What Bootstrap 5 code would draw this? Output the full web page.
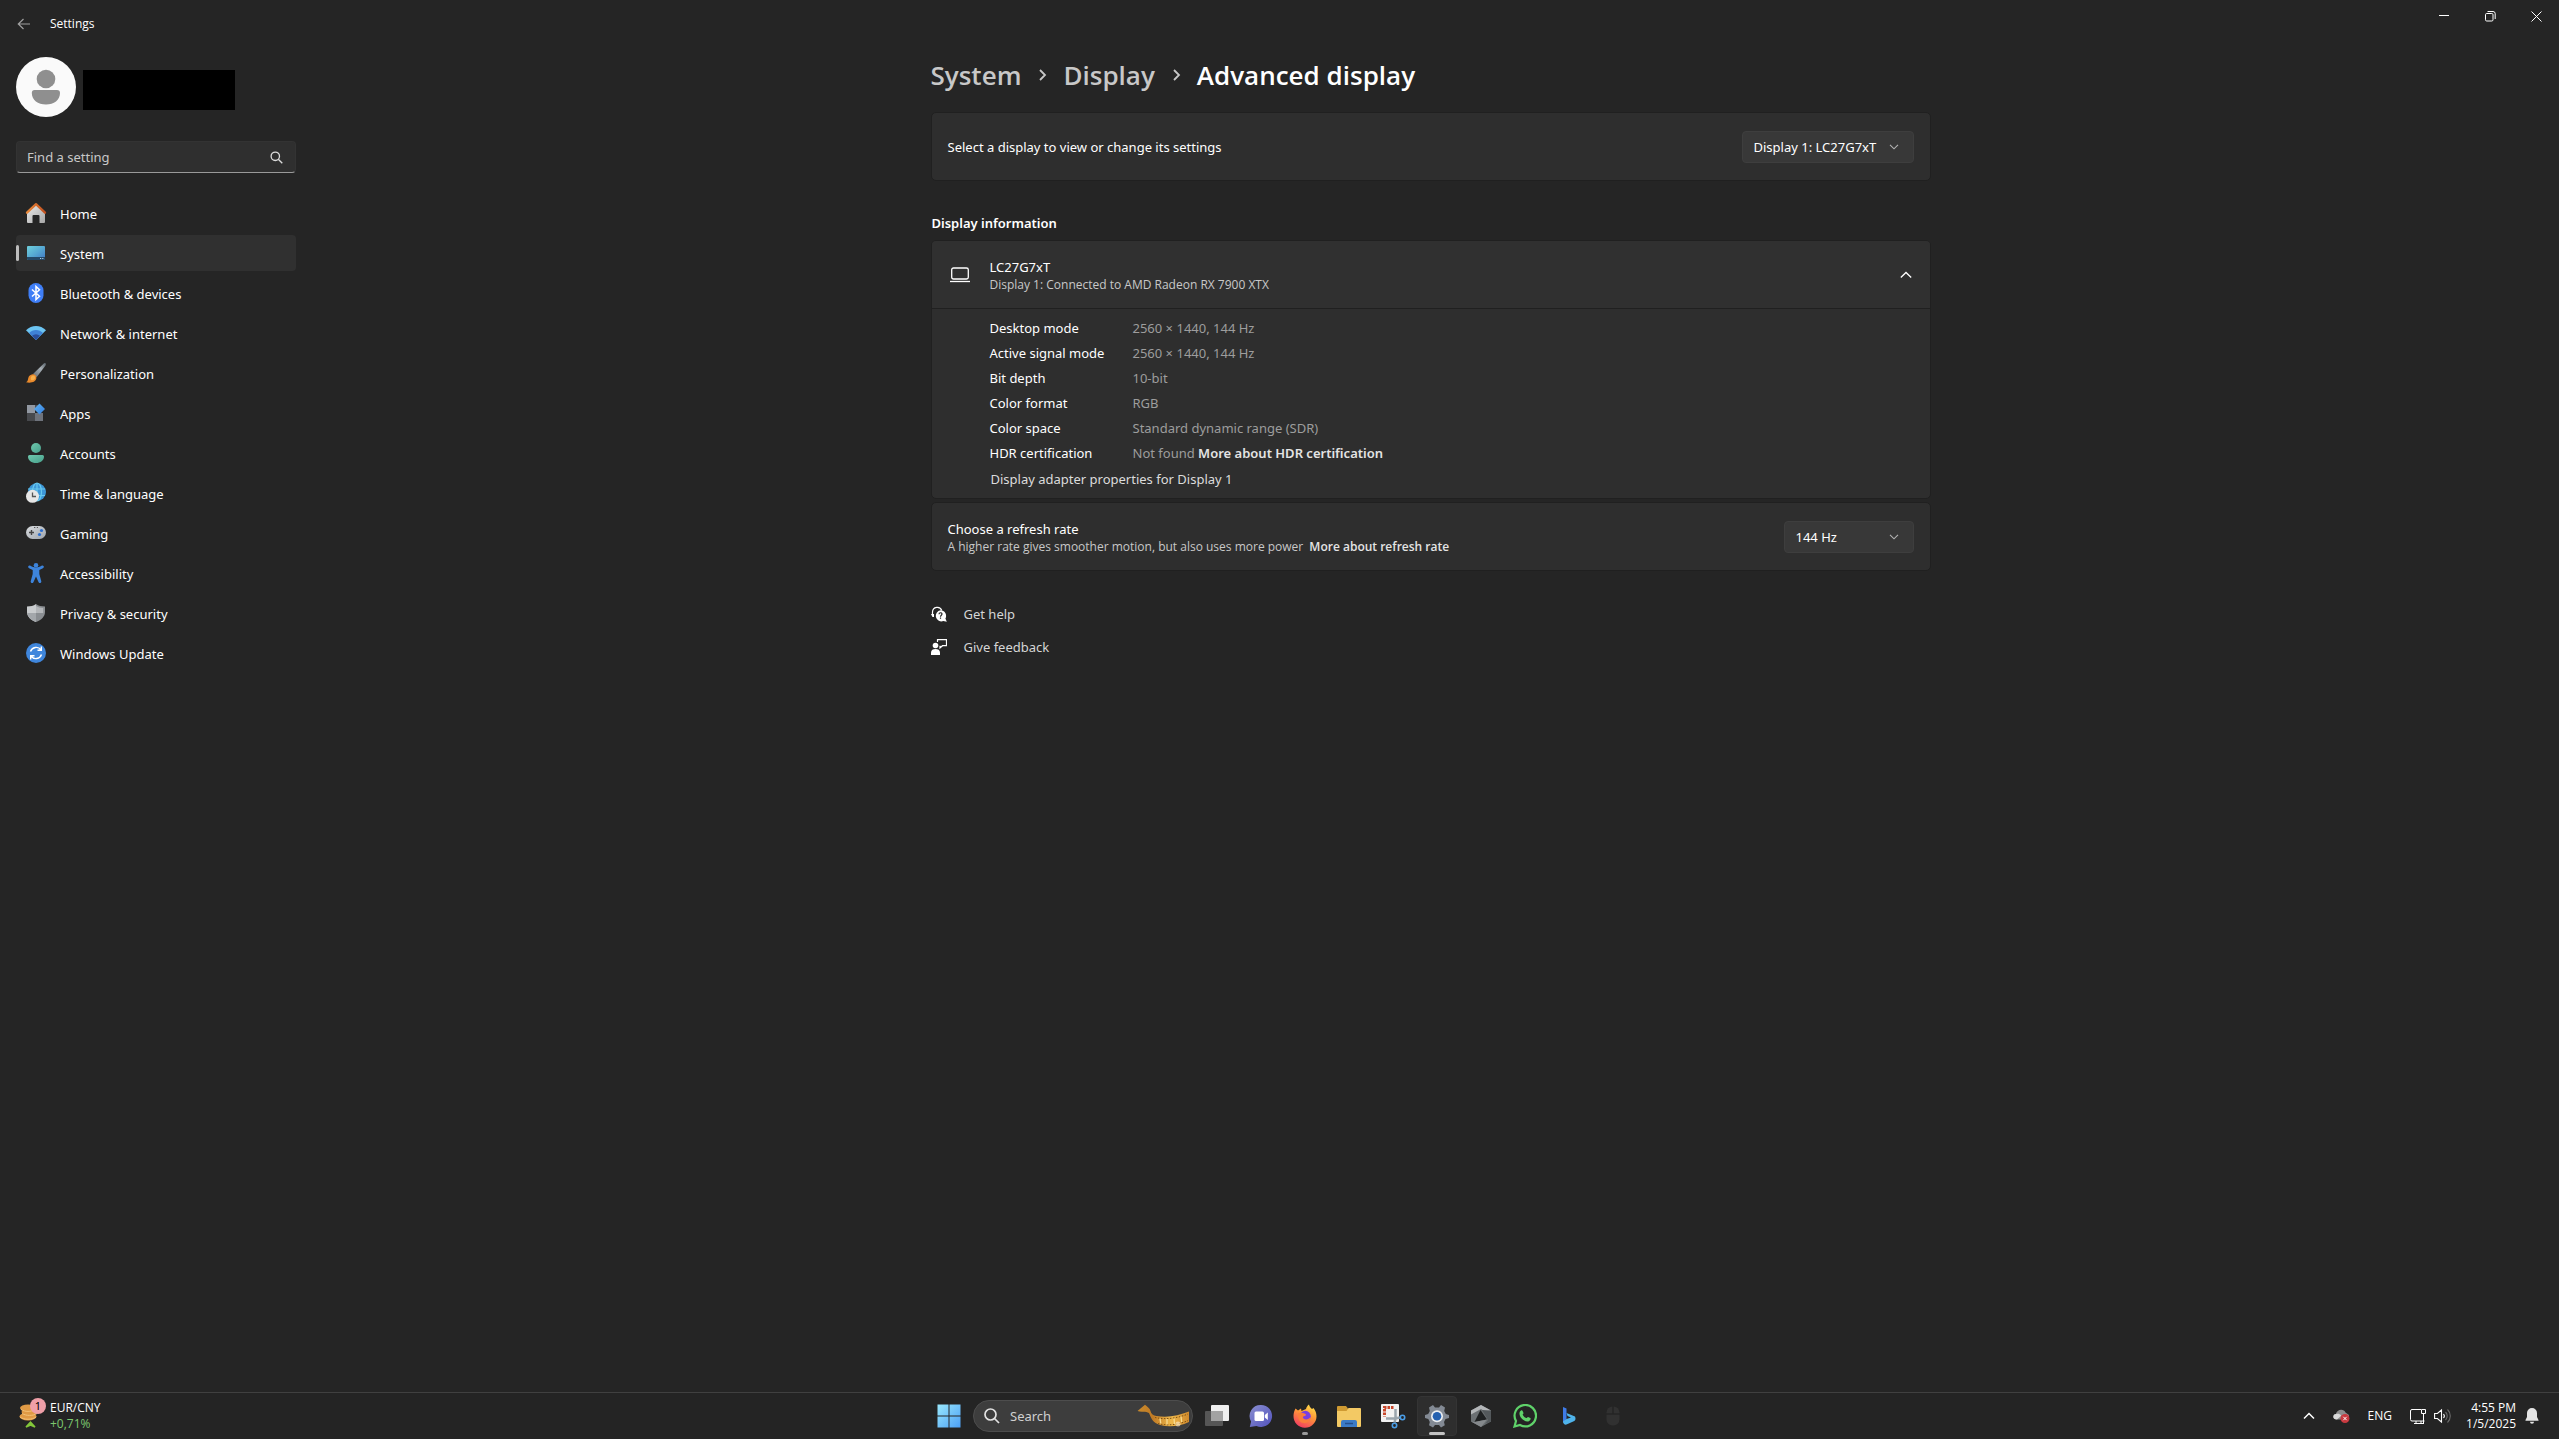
<!DOCTYPE html>
<html lang="en" data-bs-theme="dark">
<head>
<meta charset="utf-8">
<meta name="viewport" content="width=device-width, initial-scale=1">
<title>Settings</title>
<link href="https://cdn.jsdelivr.net/npm/bootstrap@5.3.0/dist/css/bootstrap.min.css" rel="stylesheet">
<script src="https://cdn.jsdelivr.net/npm/bootstrap@5.3.0/dist/js/bootstrap.bundle.min.js"></script>
<style>
  body { font-family: "Noto Sans", "Open Sans", sans-serif; font-size: 13px; line-height: 20px; background: #252525; color: #fff; }
  button, a { color: inherit; text-decoration: none; }
  svg { display: block; flex: none; }
  .small-line { font-family: "Open Sans", sans-serif; font-size: 12px; line-height: 16px; }
  .soft { color: #c8c8c8; }
  .bare { background: none; border: 0; padding: 0; border-radius: 4px; display: flex; align-items: center; justify-content: center; }

  .titlebar { height: 48px; }
  .win-btn { width: 46px; height: 32px; }
  .back-btn { width: 48px; height: 48px; margin-right: 2px; }

  .side { width: 302px; padding: 9px 6px 0 16px; flex: none; }
  .avatar { width: 60px; height: 60px; border-radius: 50%; background: #fafafa; }
  .name-box { width: 152px; height: 40px; background: #000; margin-left: 7px; margin-top: 6px; }
  .find-box { width: 280px; margin-top: 24px; }
  .find-box input { height: 32px; padding: 0 36px 0 10px; font-size: 13px; background: #2f2f2f; border: 1px solid #333; border-bottom-color: #9a9a9a; border-radius: 4px; color: #fff; }
  .find-box input::placeholder { color: #c8c8c8; opacity: 1; }
  .find-box svg { top: 10px; right: 13px; }
  .side-nav { margin-top: 22px; gap: 4px; width: 280px; }
  .side-nav .nav-link { height: 36px; padding: 2px 8px 0; gap: 12px; border-radius: 4px; color: #fff; }
  .side-nav .nav-link svg { margin-bottom: 2px; }
  .side-nav .nav-link.active { background: #303030; }
  .side-nav .nav-link.active::before { content: ""; position: absolute; left: 0; top: 10px; width: 3px; height: 16px; border-radius: 2px; background: #bdbdbd; }

  .content-col { max-width: 1000px; }
  .crumbs { font-family: "Open Sans", sans-serif; font-size: 26px; line-height: 36px; font-weight: 600; margin: 9px 0 19px; gap: 15px; }
  .crumbs li { color: #c8c8c8; }
  .crumbs li:last-child { color: #fff; }
  .info-title { font-size: 13px; line-height: 20px; font-weight: 600; margin: 32px 0 7px 1px; }
  .panel { background: #2e2e2e; border: 1px solid #202020; border-radius: 5px; }
  .panel-row { min-height: 67px; padding: 0 16px; }
  .panel-head { background: #303030; border-radius: 4px 4px 0 0; width: 100%; border: 0; text-align: left; color: #fff; min-height: 67px; padding: 0 18px; }
  .head-text { margin-left: 20px; }
  .panel-body { border-top: 1px solid #202020; padding: 7px 16px 2px 58px; }
  .facts { grid-template-columns: 143px 1fr; line-height: 25px; margin: 0; }
  .facts dt { font-weight: 400; }
  .facts dd { margin: 0; color: #9d9d9d; }
  .strong-link { font-weight: 600; color: #e4e4e4; }
  .adapter-link { margin: 3px 0 7px 1px; color: #dcdcdc; }
  .rate-panel { margin-top: 3px; }
  .rate-link { margin-left: 3px; }
  .drop { appearance: none; border: 1px solid #3e3e3e; border-radius: 4px; height: 32px; background: #383838; color: #fff; font-size: 13px; padding: 0 30px 0 11px; }
  .drop-wrap svg { right: 15px; top: 13px; pointer-events: none; }
  .w-display { width: 172px; }
  .w-rate { width: 130px; }
  .help-list { margin-top: 33px; gap: 13px; }
  .help-list a { gap: 17px; color: #d6d6d6; }

  .taskbar { height: 47px; background: #242424; border-top: 1px solid #404040; }
  .task-mid { padding-left: 3px; gap: 2px; }
  .task-btn { width: 44px; height: 40px; position: relative; }
  .task-btn.is-on::before { content: ""; position: absolute; inset: 0 2px; background: #2e2e2e; border: 1px solid #343434; border-radius: 4px; }
  .task-btn svg { position: relative; }
  .task-btn.has-run::after { content: ""; position: absolute; bottom: 1px; width: 6px; height: 3px; border-radius: 2px; background: #9a9a9a; }
  .task-btn.is-on::after { width: 16px; background: #c4c4c4; }
  .task-search { width: 220px; height: 32px; border-radius: 16px; background: #3d3d3d; border: 1px solid #4d4d4d; padding: 0 2px 0 10px; }
  .task-search input { background: none; border: 0; outline: 0; padding: 0; margin-left: 10px; color: #d0d0d0; min-width: 0; font-size: 13px; }
  .task-search input::placeholder { color: #d0d0d0; opacity: 1; }
  .widget { padding: 0 0 0 19px; gap: 10px; text-align: left; }
  .widget svg { margin-bottom: 4px; }
  .count-dot { left: 30px; top: -2px; width: 16px; height: 16px; border-radius: 50%; background: #ef9fa8; color: #000; font-size: 11px; line-height: 16px; text-align: center; }
  .up-text { color: #7cc86f; }
  .tray { padding-right: 20px; }
  .cloud-btn { margin: 0 18px; }
  .lang-btn { margin-right: 18px; }
  .vol-btn { margin: 0 15px 0 7px; }
  .bell-btn { margin-left: 9px; }
</style>
</head>
<body class="d-flex flex-column min-vh-100">

<header class="titlebar d-flex align-items-start justify-content-between">
  <div class="d-flex align-items-center">
    <button class="bare back-btn" aria-label="Back"><svg width="14" height="14" viewBox="0 0 14 14" fill="none" stroke="#a0a0a0" stroke-width="1.2"><path d="M13 7H1.5M6.5 2 1.3 7l5.2 5"/></svg></button>
    <span class="small-line">Settings</span>
  </div>
  <div class="d-flex">
    <button class="bare win-btn" aria-label="Minimize"><svg width="10" height="10" stroke="#fff"><path d="M0 4.5h10"/></svg></button>
    <button class="bare win-btn" aria-label="Restore"><svg width="11" height="11" fill="none" stroke="#fff"><rect x=".5" y="2.5" width="7.5" height="7.500" rx="1.2"/><path d="M2.500.5H8a2.200 2.200 0 0 1 2.200 2.200V8"/></svg></button>
    <button class="bare win-btn" aria-label="Close"><svg width="11" height="11" stroke="#fff"><path d="m.5.5 10 10m0-10-10 10"/></svg></button>
  </div>
</header>

<div class="d-flex flex-grow-1">
  <aside class="side">
    <div class="d-flex align-items-center">
      <div class="avatar d-flex justify-content-center"><svg width="60" height="60" fill="#8f8f8f"><circle cx="30" cy="22" r="9.3"/><path d="M19 33h22a3 3 0 0 1 3 3c0 7-6 11.500-14 11.500S15.800 43 15.800 36a3 3 0 0 1 3.200-3z"/></svg></div>
      <div class="name-box"></div>
    </div>
    <div class="find-box position-relative">
      <input class="form-control" type="text" placeholder="Find a setting" aria-label="Find a setting">
      <svg class="position-absolute" width="13" height="13" fill="none" stroke="#dcdcdc" stroke-width="1.3"><circle cx="5.3" cy="5.3" r="4.2"/><path d="m8.300 8.300 4 4"/></svg>
    </div>
    <nav class="side-nav nav flex-column">
      <a class="nav-link d-flex align-items-center" href="#"><svg width="24" height="24" viewBox="0 0 24 24"><defs><linearGradient id="hm" x1="0" y1="0" x2="1" y2="1"><stop stop-color="#ececec"/><stop offset="1" stop-color="#a6a6a6"/></linearGradient><linearGradient id="rf"><stop stop-color="#e8893a"/><stop offset="1" stop-color="#c2501f"/></linearGradient></defs><path d="M3 10.500 12 3l9 7.500V21a1 1 0 0 1-1 1h-4.500v-7a1 1 0 0 0-1-1h-5a1 1 0 0 0-1 1v7H4a1 1 0 0 1-1-1z" fill="url(#hm)"/><path d="m3 11.700 9-8.500 9 8.500" fill="none" stroke="url(#rf)" stroke-width="2.3" stroke-linecap="round" stroke-linejoin="round"/></svg>Home</a>
      <a class="nav-link active d-flex align-items-center position-relative" href="#"><svg width="24" height="24" viewBox="0 0 24 24"><defs><linearGradient id="sy" x1="0" y1="0" x2="1" y2="1"><stop stop-color="#6fd0dc"/><stop offset=".5" stop-color="#56a8d2"/><stop offset="1" stop-color="#3f76c4"/></linearGradient></defs><rect x="3" y="5" width="18" height="14" rx="1" fill="url(#sy)"/><path d="M3 16h18v2a1 1 0 0 1-1 1H4a1 1 0 0 1-1-1z" fill="#254867"/><path d="M16 17.500h1.200m1 0h1.200" stroke="#a9cbe6"/></svg>System</a>
      <a class="nav-link d-flex align-items-center" href="#"><svg width="24" height="24" viewBox="0 0 24 24"><rect x="4.500" y="2" width="15" height="20" rx="7.5" fill="#3f7ef6"/><path d="m8 8.500 7.500 6.700-3.500 3.300v-13l3.500 3.300L8 15.500" fill="none" stroke="#fff" stroke-width="1.5"/></svg>Bluetooth &amp; devices</a>
      <a class="nav-link d-flex align-items-center" href="#"><svg width="24" height="24" viewBox="0 0 24 24"><path d="M2 9.300c5.500-5.700 14.500-5.700 20 0L12 19z" fill="#6cc4f2"/><path d="M5 12c4-4 10-4 14 0l-7 7z" fill="#3f82d6"/><path d="M8 14.800c2.500-2 5.500-2 8 0L12 19z" fill="#2b4f9c"/></svg>Network &amp; internet</a>
      <a class="nav-link d-flex align-items-center" href="#"><svg width="24" height="24" viewBox="0 0 24 24"><defs><linearGradient id="br" x1="1" y1="0" x2="0" y2="1"><stop stop-color="#59636b"/><stop offset=".4" stop-color="#a8b0b6"/><stop offset="1" stop-color="#5c666e"/></linearGradient></defs><path d="M21.500 2.300c.8.800.3 1.700-.2 2.500L12.600 16.300l-3.600-3.200L19.300 3c.7-.7 1.500-1.200 2.200-.7z" fill="url(#br)"/><path d="M8.700 13.300c2-.3 4 1.500 3.700 3.700C12 20.800 7.500 22.500 2 21.300c2-1 1.800-2.300 2.300-4.300.5-2 2-3.500 4.400-3.700z" fill="#e98a2c"/><path d="M9 14.500c1.300 0 2.400 1 2.200 2.500-.4 2-2.500 2.600-4 2.300-1-2.300-.2-4.500 1.800-4.800z" fill="#f6b04c"/></svg>Personalization</a>
      <a class="nav-link d-flex align-items-center" href="#"><svg width="24" height="24" viewBox="0 0 24 24"><defs><linearGradient id="ap" x1="0" y1="0" x2="1" y2="1"><stop stop-color="#62b4f0"/><stop offset="1" stop-color="#2f7be0"/></linearGradient></defs><path d="M3 4h8v8H3z" fill="#9298a2"/><path d="M3 12h8v8H3z" fill="#47494d"/><path d="M11 12h8v8h-8z" fill="#6e737c"/><path d="M11 4h4l-4 6z" fill="#4b4e55"/><path d="m15.500 2.500 5.500 5.500-5.500 5.500L10 8z" fill="url(#ap)"/></svg>Apps</a>
      <a class="nav-link d-flex align-items-center" href="#"><svg width="24" height="24" viewBox="0 0 24 24"><defs><linearGradient id="ac" x1="0" y1="0" x2="1" y2="1"><stop stop-color="#6fc9ae"/><stop offset="1" stop-color="#479f8b"/></linearGradient></defs><circle cx="12" cy="7" r="5" fill="url(#ac)"/><path d="M5.500 14h13a1.500 1.500 0 0 1 1.500 1.500C20 19.500 16.500 22 12 22s-8-2.500-8-6.500A1.500 1.500 0 0 1 5.500 14z" fill="url(#ac)"/></svg>Accounts</a>
      <a class="nav-link d-flex align-items-center" href="#"><svg width="24" height="24" viewBox="0 0 24 24"><circle cx="13" cy="11" r="9" fill="#3d97d8"/><path d="M13 2v18M4 8h17M4.500 14.500h16.500" stroke="#68c9ee" stroke-width="1.2" fill="none"/><ellipse cx="13" cy="11" rx="4.5" ry="9" fill="none" stroke="#68c9ee" stroke-width="1.2"/><circle cx="8.500" cy="15.300" r="6.5" fill="#e6e6e6"/><path d="M8.500 11.500v4H12" fill="none" stroke="#555" stroke-width="1.3"/></svg>Time &amp; language</a>
      <a class="nav-link d-flex align-items-center" href="#"><svg width="24" height="24" viewBox="0 0 24 24"><defs><linearGradient id="gm" x1="0" y1="0" x2="1" y2="1"><stop stop-color="#d9dcdf"/><stop offset="1" stop-color="#9ea4ac"/></linearGradient></defs><rect x="2" y="5" width="20" height="13" rx="6.5" fill="url(#gm)"/><path d="M7.500 9v5M5 11.500h5" stroke="#444" stroke-width="1.4"/><circle cx="17.500" cy="9.500" r="1.600" fill="#2d6fd0"/><circle cx="15.500" cy="13.500" r="1.600" fill="#2d6fd0"/><path d="M10 6.500h1.300m1.500 0H14" stroke="#555"/></svg>Gaming</a>
      <a class="nav-link d-flex align-items-center" href="#"><svg width="24" height="24" viewBox="0 0 24 24" fill="#3d84dc"><circle cx="12" cy="4.300" r="2.300"/><path d="M4.300 5.300c.5-1 1.500-.9 2.200-.5 3.300 2.200 7.700 2.200 11 0 .7-.4 1.700-.5 2.200.5.400.9-.1 1.500-.8 1.900L15.300 9v4l2 7.300c.3 1.900-2 2.500-2.700.9L12 15.500l-2.600 5.700c-.7 1.600-3 1-2.700-.9l2-7.300V9L5.100 7.200c-.7-.4-1.200-1-.8-1.900z"/></svg>Accessibility</a>
      <a class="nav-link d-flex align-items-center" href="#"><svg width="24" height="24" viewBox="0 0 24 24"><path d="M12 3c2.500 1.800 5.500 2.500 9 2.500V11c0 4.500-3.500 8-9 10z" fill="#8a8e92"/><path d="M12 3C9.500 4.800 6.500 5.500 3 5.500V11c0 4.500 3.500 8 9 10z" fill="#c9ccce"/><path d="M3.200 12H12v9c-4.700-1.700-8-4.800-8.800-9z" fill="#a3a7ab"/><path d="M12 5c2 1.300 4.300 1.900 7.200 2V12H12z" fill="#b3b6b9"/></svg>Privacy &amp; security</a>
      <a class="nav-link d-flex align-items-center" href="#"><svg width="24" height="24" viewBox="0 0 24 24"><circle cx="12" cy="12" r="10" fill="#3f86dc"/><path d="M6.500 10.500A6 6 0 0 1 17 8.800m.5 4.700A6 6 0 0 1 7 15.200M17.300 5.500v3.800h-3.800M6.700 18.500v-3.800h3.800" fill="none" stroke="#fff" stroke-width="1.4"/></svg>Windows Update</a>
    </nav>
  </aside>

  <main class="flex-grow-1">
    <div class="content-col mx-auto">
      <nav aria-label="breadcrumb">
        <ol class="crumbs breadcrumb align-items-center">
          <li><a href="#">System</a></li>
          <li aria-hidden="true"><svg width="12" height="14" fill="none" stroke="#c8c8c8" stroke-width="1.8"><path d="m4 2 5 5-5 5"/></svg></li>
          <li><a href="#">Display</a></li>
          <li aria-hidden="true"><svg width="12" height="14" fill="none" stroke="#c8c8c8" stroke-width="1.8"><path d="m4 2 5 5-5 5"/></svg></li>
          <li aria-current="page">Advanced display</li>
        </ol>
      </nav>

      <section class="panel">
        <div class="panel-row d-flex align-items-center justify-content-between">
          <label for="pick-display">Select a display to view or change its settings</label>
          <div class="drop-wrap position-relative">
            <select id="pick-display" class="drop w-display"><option>Display 1: LC27G7xT</option></select>
            <svg class="position-absolute" width="10" height="6" fill="none" stroke="#b4b4b4" stroke-width="1.1"><path d="m1 .8 4 4 4-4"/></svg>
          </div>
        </div>
      </section>

      <h2 class="info-title">Display information</h2>

      <section class="panel">
        <button class="panel-head d-flex align-items-center" aria-expanded="true">
          <svg width="20" height="16" fill="none" stroke="#fff" stroke-width="1.3"><rect x="1.700" y="1" width="16.600" height="11" rx="1.8"/><path d="M0 14.500h20"/></svg>
          <span class="head-text d-flex flex-column flex-grow-1"><span>LC27G7xT</span><span class="small-line soft">Display 1: Connected to AMD Radeon RX 7900 XTX</span></span>
          <svg width="12" height="8" fill="none" stroke="#fff" stroke-width="1.3"><path d="m.8 6.500 5.200-5 5.200 5"/></svg>
        </button>
        <div class="panel-body">
          <dl class="facts d-grid">
            <dt>Desktop mode</dt><dd>2560 × 1440, 144 Hz</dd>
            <dt>Active signal mode</dt><dd>2560 × 1440, 144 Hz</dd>
            <dt>Bit depth</dt><dd>10-bit</dd>
            <dt>Color format</dt><dd>RGB</dd>
            <dt>Color space</dt><dd>Standard dynamic range (SDR)</dd>
            <dt>HDR certification</dt><dd>Not found <a class="strong-link" href="#">More about HDR certification</a></dd>
          </dl>
          <a class="adapter-link d-inline-block align-top" href="#">Display adapter properties for Display 1</a>
        </div>
      </section>

      <section class="panel rate-panel">
        <div class="panel-row d-flex align-items-center justify-content-between">
          <div class="d-flex flex-column">
            <label for="pick-rate">Choose a refresh rate</label>
            <span class="small-line soft">A higher rate gives smoother motion, but also uses more power <a class="strong-link rate-link" href="#">More about refresh rate</a></span>
          </div>
          <div class="drop-wrap position-relative">
            <select id="pick-rate" class="drop w-rate"><option>144 Hz</option></select>
            <svg class="position-absolute" width="10" height="6" fill="none" stroke="#b4b4b4" stroke-width="1.1"><path d="m1 .8 4 4 4-4"/></svg>
          </div>
        </div>
      </section>

      <div class="help-list d-flex flex-column align-items-start">
        <a class="d-flex align-items-center" href="#"><svg width="16" height="16" viewBox="0 0 16 16"><path d="M1.500 9.500V6a4.800 4.800 0 0 1 9.300-1.500" fill="none" stroke="#fff" stroke-width="1.2"/><path d="M0 8h3v3H1.500zM4 10.500h1.500" fill="#fff"/><path d="M9.500 4.300a5.600 5.600 0 0 1 4.900 8.300l1.400 3.200-3.500-.7A5.600 5.600 0 1 1 9.500 4.300z" fill="#fff"/><path d="M8 8.300c0-2 3-2 3-.2 0 1.200-1.500 1.200-1.500 2.600m0 .8v1.300" stroke="#242424" stroke-width="1.2" fill="none"/></svg>Get help</a>
        <a class="d-flex align-items-center" href="#"><svg width="16" height="16" viewBox="0 0 16 16"><circle cx="4.500" cy="6.500" r="2.800" fill="#fff"/><path d="M0 16v-2.500C0 11 2 10 4.500 10S9 11 9 13.500V16z" fill="#fff"/><path d="M6.500 3V.7h9v6h-4L9 9V6.700" fill="none" stroke="#fff" stroke-width="1.2"/></svg>Give feedback</a>
      </div>
    </div>
  </main>
</div>

<footer class="taskbar d-flex align-items-center">
  <div class="flex-fill w-25">
    <button class="bare widget position-relative">
      <svg width="21" height="28" viewBox="0 0 21 28"><g fill="#e09a45"><ellipse cx="9" cy="8" rx="8" ry="3.5"/><ellipse cx="10.500" cy="12" rx="8" ry="3.5"/><ellipse cx="9" cy="16.500" rx="8.500" ry="4"/></g><g fill="none" stroke="#f4c277"><path d="M2 9.500c4 2.500 10 2.500 14 0M3 13.500c4 2.500 11 2.500 15 0M1 17c4 3 12 3 16 0"/></g><path d="m7 27 4.500-5 4.500 5-4.500-2z" fill="#83c73a" stroke="#83c73a" stroke-width="1.5"/></svg>
      <span class="small-line">EUR/CNY<br><span class="up-text">+0,71%</span></span>
      <span class="count-dot position-absolute">1</span>
    </button>
  </div>

  <div class="task-mid d-flex align-items-center">
    <button class="bare task-btn" aria-label="Start"><svg width="24" height="24" viewBox="0 0 24 24"><defs><linearGradient id="st" gradientUnits="userSpaceOnUse" x1="0" y1="0" x2="24" y2="24"><stop stop-color="#9beafd"/><stop offset="1" stop-color="#4a9df5"/></linearGradient></defs><path d="M.5.5h11v11H.5zM12.500.5h11v11h-11zM.5 12.500h11v11H.5zM12.500 12.500h11v11h-11z" fill="url(#st)"/></svg></button>
    <label class="task-search d-flex align-items-center">
      <svg width="16" height="16" fill="none" stroke="#e2e2e2" stroke-width="1.7"><circle cx="6.500" cy="6.500" r="5.5"/><path d="m10.500 10.500 4.500 4.500"/></svg>
      <input class="flex-grow-1" type="text" placeholder="Search">
      <svg width="53" height="24" viewBox="0 0 53 24"><defs><linearGradient id="fm"><stop stop-color="#c98a2c"/><stop offset=".3" stop-color="#c07a24"/><stop offset=".65" stop-color="#efb94c"/><stop offset="1" stop-color="#d08a2c"/></linearGradient></defs><path d="M.5 7 8 .8C10.500 3 13 4.500 13.500 7c.5 3 3 4.500 6 5 12 2 22-.5 32.500-4.500V18c-10 4.500-20 5.500-29 3-7-2-9-7-11-12C9 6.500 4 8.500.5 7z" fill="url(#fm)"/><path d="M18 13.500c11 2.500 23 .5 33-3.500M21 19.500c9 2.500 20 1.500 30-3" fill="none" stroke="#7d5014" stroke-dasharray="1.500 1.500"/><path d="m23 14.500.8 5M30 15v5.500M37 14.500l.5 5.500M44 12.500l.7 5.500" stroke="#f8dc92" stroke-width="1.3"/><circle cx="41" cy="20" r="2.5" fill="#fff0d0" opacity=".6"/></svg>
    </label>
    <div class="d-flex">
      <button class="bare task-btn" aria-label="Task view"><svg width="24" height="24"><rect y="7" width="18" height="15" rx="1" fill="#565656"/><rect x="6" y="1" width="18" height="16" rx="1" fill="#efefef"/><path d="M6 7h12v10H6z" fill="#a2a2a2"/></svg></button>
      <button class="bare task-btn" aria-label="Chat"><svg width="24" height="24" viewBox="0 0 24 24"><defs><linearGradient id="ch" x1="0" y1="0" x2="1" y2="1"><stop stop-color="#8a8fd0"/><stop offset="1" stop-color="#5252bd"/></linearGradient></defs><path d="M12 1a11 11 0 1 1-4.500 21L.8 23l1.300-5.500A11 11 0 0 1 12 1z" fill="url(#ch)"/><rect x="5.500" y="7.500" width="9.500" height="9.500" rx="1.5" fill="#fff"/><path d="m15.800 11 3-2.500v7.500l-3-2.500z" fill="#fff"/></svg></button>
      <button class="bare task-btn has-run" aria-label="Firefox"><svg width="24" height="24" viewBox="0 0 24 24"><defs><linearGradient id="ff" x1=".8" y1="0" x2=".3" y2="1"><stop stop-color="#ffe24a"/><stop offset=".45" stop-color="#ff9738"/><stop offset="1" stop-color="#f23b62"/></linearGradient></defs><path d="M2.500 4.500 5 6.500l3-2 .5 2.500L13 5c.5-2 1.500-3.500 3-4.500.3 2.500 2 3.500 3 4.500l1.500-1c2 2.500 3 5.500 3 8.500A11.500 11.500 0 1 1 .5 12c0-2.700.8-5.300 2-7.500z" fill="url(#ff)"/><circle cx="12.300" cy="12.300" r="5.5" fill="#7a3fe0"/><path d="M5 9.500c2.500-1 4.500-.8 7 .2 1.500.6 1 2-.5 2.300-2 .4-2 1.500-1 2.500 2.500 2 5.500.5 7-1.500-.5 4-3 6-6.500 6S4.500 16 5 9.500z" fill="#fb7e3c"/></svg></button>
      <button class="bare task-btn" aria-label="File Explorer"><svg width="24" height="24" viewBox="0 0 24 24"><path d="M0 3a1 1 0 0 1 1-1h8l2 2.500V8H0z" fill="#cf9a32"/><path d="M0 7h9.500l2-3H23a1 1 0 0 1 1 1v17a1 1 0 0 1-1 1H1a1 1 0 0 1-1-1z" fill="#f3c964"/><path d="M4 23v-5a2 2 0 0 1 2-2h12a2 2 0 0 1 2 2v5z" fill="#3b7bc6"/><path d="M8 19.500h8" stroke="#244f8c" stroke-width="1.5"/></svg></button>
      <button class="bare task-btn" aria-label="Snipping Tool"><svg width="26" height="26" viewBox="0 0 26 26"><rect x="1" y="1" width="18" height="18" rx="1" fill="#f2f2f2"/><path d="M13.500 4.500h-9v9" fill="none" stroke="#c8472b" stroke-width="3" stroke-dasharray="2.500 1"/><path d="M15.500 6v9.500l-1 4M6 15.500h9l5-1" fill="none" stroke="#9aa5ad" stroke-width="2.5"/><circle cx="22.500" cy="14.500" r="2.200" fill="none" stroke="#4a9de6" stroke-width="1.6"/><circle cx="14.500" cy="22.500" r="2.200" fill="none" stroke="#4a9de6" stroke-width="1.6"/></svg></button>
      <button class="bare task-btn has-run is-on" aria-label="Settings"><svg width="24" height="24" viewBox="0 0 24 24"><path d="m8 1 2 2.500h4L16 1l4 2.500-.8 3.500 1.600 3L24 11v3l-3.500 1-1.500 3 .8 3.200L16 23.500 14 21h-4l-2 2.500-4-2.300.8-3.200-1.500-3L0 14v-3l3.200-1 1.600-3L4 3.500z" fill="#838a94"/><circle cx="12" cy="12.200" r="6" fill="#eceff2"/><circle cx="12" cy="12.200" r="4.300" fill="#2561b0"/></svg></button>
      <button class="bare task-btn" aria-label="Cube app"><svg width="22" height="22" viewBox="0 0 22 22"><path d="m11 0 10 5.500v11L11 22 1 16.500v-11z" fill="#6b7073"/><path d="m11 0 10 5.500-6 1L11 4 1 9.500v-4z" fill="#b3b6b8"/><path d="m10.500 5 6.500 9.500L4.500 17z" fill="#1f2122"/><path d="M12 5l9 .5v11L15 19l3-4z" fill="#54595c"/><path d="m1 16.500 3.500.5L17 14.500 11 22z" fill="#85898c"/></svg></button>
      <button class="bare task-btn" aria-label="WhatsApp"><svg width="24" height="24" viewBox="0 0 24 24"><path d="M1.500 22.500 3 17A10.700 10.700 0 1 1 7 21z" fill="none" stroke="#5fd26a" stroke-width="2.2"/><path d="M8 6.500c.8-.5 1.300-.3 1.600.4l.9 2c.2.600-.9 1.500-.8 1.800.8 1.600 2 2.700 3.600 3.400.5.200 1.300-1.300 1.800-1.100l2.200 1.100c1 .6-.3 3-2 3.300-4.200.7-9.300-4.300-8.800-8.400.1-1.100.7-2 1.500-2.500z" fill="#5fd26a"/></svg></button>
      <button class="bare task-btn" aria-label="Bing"><svg width="14" height="18" viewBox="0 0 14 18"><path d="m1 0 3.500 1.500v10.500L1 16z" fill="#3e7be8"/><path d="m1 14.500 3.500-2.500L9 10.500 5.500 9 4.500 6 13 9.500c1 2 .5 3.500-.7 4.500L4.500 17.500C3 18 1 17 1 14.500z" fill="#4fb3ea"/></svg></button>
      <button class="bare task-btn" aria-label="Mouse utility"><svg width="14" height="20" viewBox="0 0 14 20"><rect x=".5" y=".5" width="13" height="19" rx="6" fill="#313131"/><path d="M7 0v8M0 8h14" stroke="#242424" stroke-width="1.5"/></svg></button>
    </div>
  </div>

  <div class="tray flex-fill w-25 d-flex align-items-center justify-content-end">
    <button class="bare" aria-label="Show hidden icons"><svg width="12" height="8" fill="none" stroke="#fff" stroke-width="1.5"><path d="m1 6.500 5-5 5 5"/></svg></button>
    <button class="bare cloud-btn" aria-label="Cloud sync error"><svg width="17" height="16" viewBox="0 0 17 16"><path d="M4 11.500C-1 11.500-.5 6 3 6c.5-5 8-6 9.500-1.500L16 7v4.500z" fill="#8d8d8d"/><path d="M3 6c2-.5 4 0 5.500 1.500L4 11.500C-1 11.500-.5 6 3 6z" fill="#d9d9d9"/><circle cx="12" cy="10.500" r="4.5" fill="#c8393f"/><path d="m10.300 8.800 3.400 3.400m0-3.400-3.400 3.400" stroke="#fff"/></svg></button>
    <button class="bare small-line lang-btn">ENG</button>
    <button class="bare" aria-label="Network"><svg width="17" height="17" fill="none" stroke="#fff"><path d="M11 1.500H2A1.500 1.500 0 0 0 .5 3v8.500A1.500 1.500 0 0 0 2 13h12.500M6 13v2.500m5-2.500v2.500M4 15.500h9M11.500 1.500h4v4h-4zM13.500 5.500V16"/></svg></button>
    <button class="bare vol-btn" aria-label="Volume"><svg width="17" height="16" fill="none" stroke="#fff" stroke-width="1.1"><path d="M.6 5.500h2.800L7.500 2v12l-4.100-3.500H.6zM9.500 6a3 3 0 0 1 0 4"/><path d="M11.500 4a5.500 5.500 0 0 1 0 8m2-10.500a9 9 0 0 1 0 13" stroke="#6c6c6c"/></svg></button>
    <button class="bare small-line text-end clock-btn">4:55 PM<br>1/5/2025</button>
    <button class="bare bell-btn" aria-label="Notifications"><svg width="14" height="16" viewBox="0 0 14 16" fill="#e3e3e3"><path d="M7 0a5 5 0 0 1 5 5v4l1.500 3v.8H.5V12L2 9V5a5 5 0 0 1 5-5zM5 13.700h4a2 2 0 0 1-4 0z"/></svg></button>
  </div>
</footer>
</body>
</html>
